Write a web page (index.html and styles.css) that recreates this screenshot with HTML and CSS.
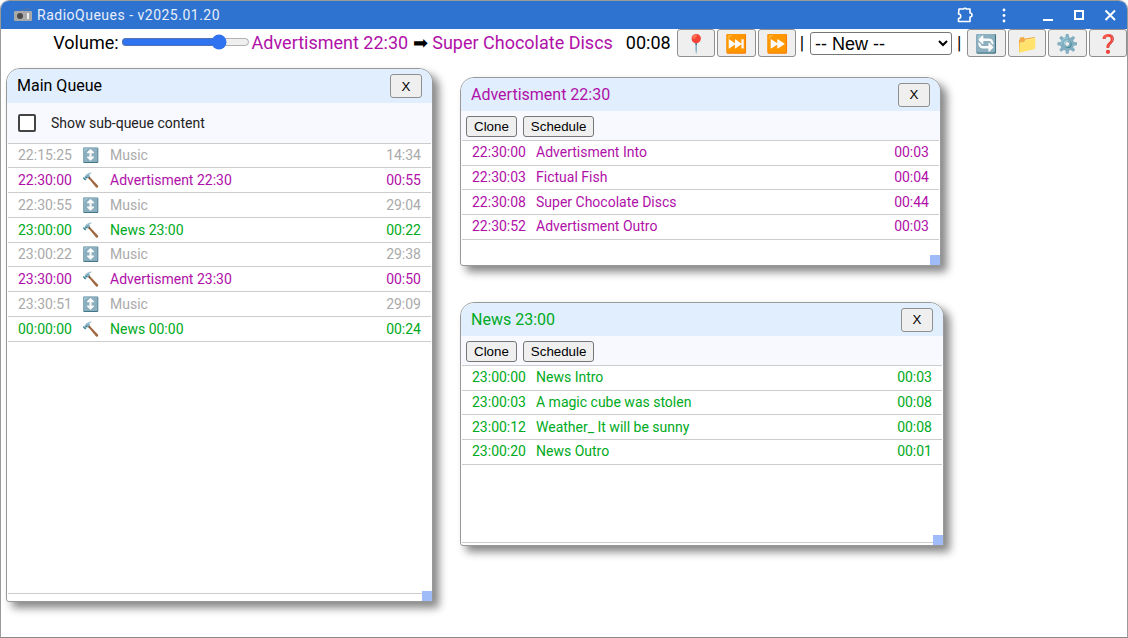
FILE: index.html
```html
<!DOCTYPE html>
<html>
<head>
    <title>RadioQueues</title>
    <link rel="stylesheet" href="styles.css">
</head>
<body>
<div class="app">
    <div class="titlebar">
        <svg class="appicon" width="18" height="14" viewBox="0 0 18 14">
            <path d="M6 3 L16 0" stroke="#777" stroke-width="0.6" fill="none"/>
            <rect x="0" y="3" width="18" height="10" rx="1" fill="#a9a9a9"/>
            <circle cx="6" cy="8" r="3" fill="#4a4a4a"/>
            <rect x="13" y="5" width="2" height="6" fill="#eee"/>
        </svg>
        <span class="apptitle">RadioQueues - v2025.01.20</span>
        <div class="winctl">
            <svg class="ctl ctl-puzzle" width="20" height="20" viewBox="0 0 20 20">
                <path d="M4 4 H8.5 A1.8 1.8 0 0 1 11.5 4 H15 V8 A1.8 1.8 0 0 1 15 12 V16.5 H3.5 V13.5 A2 2 0 0 0 3.5 9 Z" fill="none" stroke="#fff" stroke-width="1.6" stroke-linejoin="round"/>
            </svg>
            <svg class="ctl ctl-dots" width="20" height="20" viewBox="0 0 20 20">
                <circle cx="10" cy="5" r="1.4" fill="#fff"/>
                <circle cx="10" cy="10.5" r="1.4" fill="#fff"/>
                <circle cx="10" cy="16" r="1.4" fill="#fff"/>
            </svg>
            <svg class="ctl" width="20" height="20" viewBox="0 0 20 20">
                <rect x="5" y="14" width="10" height="2" fill="#fff"/>
            </svg>
            <svg class="ctl" width="20" height="20" viewBox="0 0 20 20">
                <rect x="6" y="6" width="8" height="8" fill="none" stroke="#fff" stroke-width="2"/>
            </svg>
            <svg class="ctl" width="20" height="20" viewBox="0 0 20 20">
                <path d="M5.5 5.5 L15 15 M15 5.5 L5.5 15" stroke="#fff" stroke-width="2" fill="none"/>
            </svg>
        </div>
    </div>

    <div class="toolbar">
        <span>Volume:</span>
        <input class="volume" type="range" min="0" max="100" value="80">
        <span class="adv">Advertisment 22:30</span>
        <span class="arrow">➡</span>
        <span class="adv">Super Chocolate Discs</span>
        <span class="clock">00:08</span>
        <button class="tool">📍</button>
        <button class="tool">⏭️</button>
        <button class="tool">⏩</button>
        <span class="sep">|</span>
        <select class="newq"><option>-- New --</option></select>
        <span class="sep sep-last">|</span>
        <button class="tool">🔄</button>
        <button class="tool">📁</button>
        <button class="tool">⚙️</button>
        <button class="tool">❓</button>
    </div>

    <!-- floating queue windows -->
    <div class="win win-main">
        <div class="win-head">
            <span>Main Queue</span>
            <button class="close">X</button>
        </div>
        <div class="win-bar check-bar">
            <span class="check"></span>
            <span>Show sub-queue content</span>
        </div>
        <div class="rows">
            <div class="row music"><span class="t">22:15:25</span><span class="i">↕️</span><span class="n">Music</span><span class="d">14:34</span></div>
            <div class="row adv"><span class="t">22:30:00</span><span class="i">🔨</span><span class="n">Advertisment 22:30</span><span class="d">00:55</span></div>
            <div class="row music"><span class="t">22:30:55</span><span class="i">↕️</span><span class="n">Music</span><span class="d">29:04</span></div>
            <div class="row news"><span class="t">23:00:00</span><span class="i">🔨</span><span class="n">News 23:00</span><span class="d">00:22</span></div>
            <div class="row music"><span class="t">23:00:22</span><span class="i">↕️</span><span class="n">Music</span><span class="d">29:38</span></div>
            <div class="row adv"><span class="t">23:30:00</span><span class="i">🔨</span><span class="n">Advertisment 23:30</span><span class="d">00:50</span></div>
            <div class="row music"><span class="t">23:30:51</span><span class="i">↕️</span><span class="n">Music</span><span class="d">29:09</span></div>
            <div class="row news"><span class="t">00:00:00</span><span class="i">🔨</span><span class="n">News 00:00</span><span class="d">00:24</span></div>
        </div>
        <div class="grip"></div>
    </div>

    <div class="win win-adv">
        <div class="win-head adv">
            <span>Advertisment 22:30</span>
            <button class="close">X</button>
        </div>
        <div class="win-bar">
            <button class="small">Clone</button>
            <button class="small">Schedule</button>
        </div>
        <div class="rows">
            <div class="row adv"><span class="t">22:30:00</span><span class="n">Advertisment Into</span><span class="d">00:03</span></div>
            <div class="row adv"><span class="t">22:30:03</span><span class="n">Fictual Fish</span><span class="d">00:04</span></div>
            <div class="row adv"><span class="t">22:30:08</span><span class="n">Super Chocolate Discs</span><span class="d">00:44</span></div>
            <div class="row adv"><span class="t">22:30:52</span><span class="n">Advertisment Outro</span><span class="d">00:03</span></div>
        </div>
        <div class="grip"></div>
    </div>

    <div class="win win-news">
        <div class="win-head news">
            <span>News 23:00</span>
            <button class="close">X</button>
        </div>
        <div class="win-bar">
            <button class="small">Clone</button>
            <button class="small">Schedule</button>
        </div>
        <div class="rows">
            <div class="row news"><span class="t">23:00:00</span><span class="n">News Intro</span><span class="d">00:03</span></div>
            <div class="row news"><span class="t">23:00:03</span><span class="n">A magic cube was stolen</span><span class="d">00:08</span></div>
            <div class="row news"><span class="t">23:00:12</span><span class="n">Weather_ It will be sunny</span><span class="d">00:08</span></div>
            <div class="row news"><span class="t">23:00:20</span><span class="n">News Outro</span><span class="d">00:01</span></div>
        </div>
        <div class="grip"></div>
    </div>
</div>
</body>
</html>
```

FILE: styles.css
```css
html, body { margin: 0; padding: 0; background: #fff; }
body { font-family: Roboto, sans-serif; }
.app { position: relative; box-sizing: border-box; width: 1128px; height: 638px; border: 1px solid #9a9a9a; border-bottom-color: #8a8a8a; border-radius: 9px 9px 0 0; overflow: hidden; background: #fff; }

.titlebar { display: flex; align-items: center; height: 28px; background: #2f73d0; color: #e8eefa; font-size: 14px; letter-spacing: 0.5px; padding-left: 13px; }
.appicon { margin-right: 5px; }
.winctl { display: flex; align-items: center; margin-left: auto; margin-right: 7px; gap: 11px; }
.ctl { display: block; }
.ctl-puzzle { margin-right: 8px; }
.ctl-dots { margin-right: 13px; }

.toolbar { display: flex; align-items: center; justify-content: flex-end; height: 28px; font-size: 18px; color: #000; white-space: nowrap; gap: 2px; }
.toolbar > span { padding-bottom: 2px; }
.volume { width: 129px; height: 16px; margin: 0 0 3px 0; accent-color: #2f73f0; }
.arrow { margin-left: 3px; margin-right: 2px; }
.clock { margin-left: 11px; margin-right: 4px; }
.sep { margin: 0 4px 0 1.5px; }
.sep-last { margin: 0 3.5px 0 3px; }
.tool { box-sizing: border-box; width: 38.5px; height: 28px; padding: 0; font-size: 18px; font-family: inherit; background: #efefef; border: 1px solid #8f8f8f; border-radius: 3px; }
.newq { width: 142px; height: 23px; font-size: 18px; font-family: "Liberation Sans", sans-serif; background: #fff; border: 1px solid #767676; border-radius: 3px; }

.adv { color: #b010a8; }
.news { color: #00aa22; }
.music { color: #aaa; }

.win { position: absolute; box-sizing: border-box; display: flex; flex-direction: column; background: #fff; border: 1px solid #999; border-radius: 14px 14px 3px 3px; box-shadow: 6px 6px 8px #888; }
.win-main { left: 5px; top: 67px; width: 427px; height: 534px; }
.win-adv { left: 459px; top: 76px; width: 481px; height: 189px; }
.win-news { left: 459px; top: 301px; width: 484px; height: 244px; }

.win-head { display: flex; align-items: center; justify-content: space-between; box-sizing: border-box; height: 34px; padding: 0 10px; background: #e0eefe; font-size: 16px; border-radius: 13px 13px 0 0; }
.win-head span { padding-bottom: 1px; }
.win-adv .win-head, .win-news .win-head { height: 33px; }
.close { box-sizing: border-box; width: 32px; height: 24px; padding: 0; font-size: 13.33px; font-family: "Liberation Sans", sans-serif; color: #000; background: #efefef; border: 1px solid #8f8f8f; border-radius: 3px; }

.win-bar { display: flex; align-items: center; gap: 6px; box-sizing: border-box; height: 28.75px; padding: 1.5px 5px 0; background: #f8f8ff; }
.small { box-sizing: border-box; height: 21px; padding: 0 7px; font-size: 13.33px; font-family: "Liberation Sans", sans-serif; color: #000; background: #efefef; border: 1px solid #767676; border-radius: 3px; }

.check-bar { height: 39.5px; gap: 15px; padding: 0 5px 0 11px; font-size: 14px; color: #222; }
.check { box-sizing: border-box; width: 18px; height: 18px; border: 2px solid #444; border-radius: 2px; background: #fff; }

.rows { flex: 1; border-top: 1px solid #ccc; border-bottom: 1px solid #ccc; margin: 0 1px 7px; }
.win-adv .rows { margin-bottom: 0; border-bottom: 0; }
.win-news .rows { margin-bottom: 2px; }
.row { display: flex; align-items: center; box-sizing: border-box; height: 24.75px; border-bottom: 1px solid #ccc; padding: 0 10px; font-size: 14px; }
.win-adv .row, .win-news .row { padding-bottom: 1px; }
.t { width: 64px; }
.i { width: 28px; font-size: 14px; }
.n { flex: 1; }

.grip { position: absolute; right: 0; bottom: 0; width: 10px; height: 10px; background: #a0bcf8; }
```
